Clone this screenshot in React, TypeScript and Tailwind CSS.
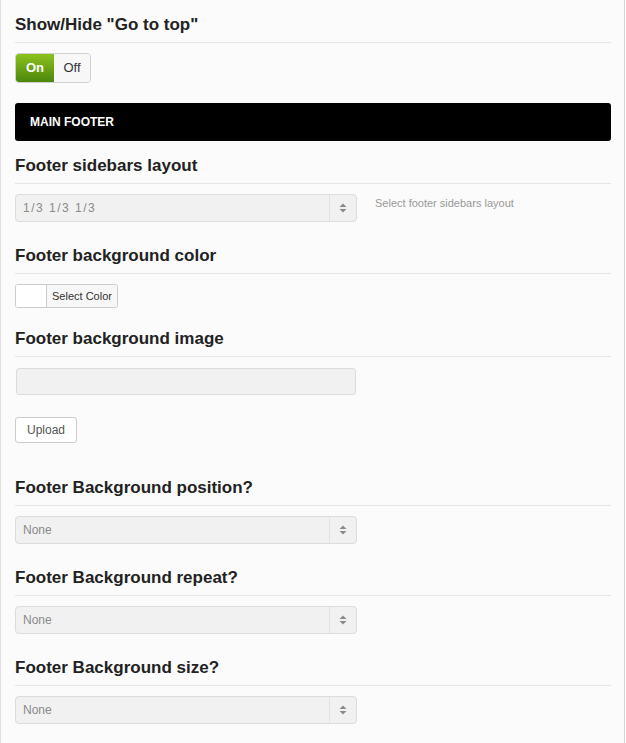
import React from 'react';

const FONT = { fontFamily: '"Liberation Sans", Arial, sans-serif' };

function Heading({ children, className = '' }: { children: React.ReactNode; className?: string }) {
  return (
    <h3 className={`text-[17px] leading-[20px] font-bold text-[#222] pb-[7px] border-b border-[#e5e5e5] ${className}`}>
      {children}
    </h3>
  );
}

function SelectBox({ value, spaced = false }: { value: string; spaced?: boolean }) {
  return (
    <div className="mt-[10px] flex h-[28px] w-[342px] items-stretch rounded-[4px] border border-[#dcdcdc] bg-[#f1f1f1]">
      <div
        className={`flex flex-1 items-center pl-[7px] text-[12px] text-[#8a8a8a] ${spaced ? 'tracking-[1.5px]' : ''}`}
      >
        {value}
      </div>
      <div className="flex w-[27px] items-center justify-center border-l border-[#e2e2e2]">
        <svg width="8" height="10" viewBox="0 0 8 10">
          <path d="M4 0.5 L7.5 4 L0.5 4 Z" fill="#8a8a8a" />
          <path d="M0.5 6 L7.5 6 L4 9.5 Z" fill="#8a8a8a" />
        </svg>
      </div>
    </div>
  );
}

export default function App() {
  return (
    <div style={FONT} className="w-[626px] h-[743px] bg-white">
      <div className="w-[625px] h-[743px] bg-[#fbfbfb] border-l border-r border-l-[#e0e0e0] border-r-[#d4d4d4] pl-[14px] pr-[13px] pt-[15px]">
        {/* Go to top */}
        <Heading>Show/Hide "Go to top"</Heading>
        <div className="mt-[10px] flex h-[30px] w-[76px] overflow-hidden rounded-[4px] border border-[#cfcfcf] text-[13px]">
          <div className="flex w-[38px] items-center justify-center bg-gradient-to-b from-[#8cc21e] to-[#4c870c] font-bold text-white">
            On
          </div>
          <div className="flex flex-1 items-center justify-center bg-[#f7f7f7] text-[#333]">Off</div>
        </div>

        {/* Main footer bar */}
        <div className="mt-[20px] flex h-[38px] items-center rounded-[3px] bg-black pl-[15px] text-[12px] font-bold text-white">
          MAIN FOOTER
        </div>

        {/* Sidebars layout */}
        <Heading className="mt-[15px]">Footer sidebars layout</Heading>
        <div className="flex items-start">
          <SelectBox value="1/3 1/3 1/3" spaced />
          <span className="mt-[13px] ml-[18px] text-[11px] leading-[13px] text-[#999]">Select footer sidebars layout</span>
        </div>

        {/* Background color */}
        <Heading className="mt-[24px]">Footer background color</Heading>
        <div className="mt-[10px] flex h-[24px] w-[103px] overflow-hidden rounded-[3px] border border-[#cccccc]">
          <div className="w-[31px] border-r border-[#cccccc] bg-white" />
          <div className="flex flex-1 items-center justify-center bg-[#f7f7f7] text-[11px] text-[#333]">
            Select Color
          </div>
        </div>

        {/* Background image */}
        <Heading className="mt-[21px]">Footer background image</Heading>
        <div className="mt-[11px] ml-px h-[27px] w-[340px] rounded-[3px] border border-[#dcdcdc] bg-[#f1f1f1]" />
        <button className="mt-[22px] flex h-[26px] w-[62px] items-center justify-center rounded-[3px] border border-[#cccccc] bg-white text-[12px] text-[#555]">
          Upload
        </button>

        {/* Position */}
        <Heading className="mt-[35px]">Footer Background position?</Heading>
        <SelectBox value="None" />

        {/* Repeat */}
        <Heading className="mt-[24px]">Footer Background repeat?</Heading>
        <SelectBox value="None" />

        {/* Size */}
        <Heading className="mt-[24px]">Footer Background size?</Heading>
        <SelectBox value="None" />
      </div>
    </div>
  );
}
